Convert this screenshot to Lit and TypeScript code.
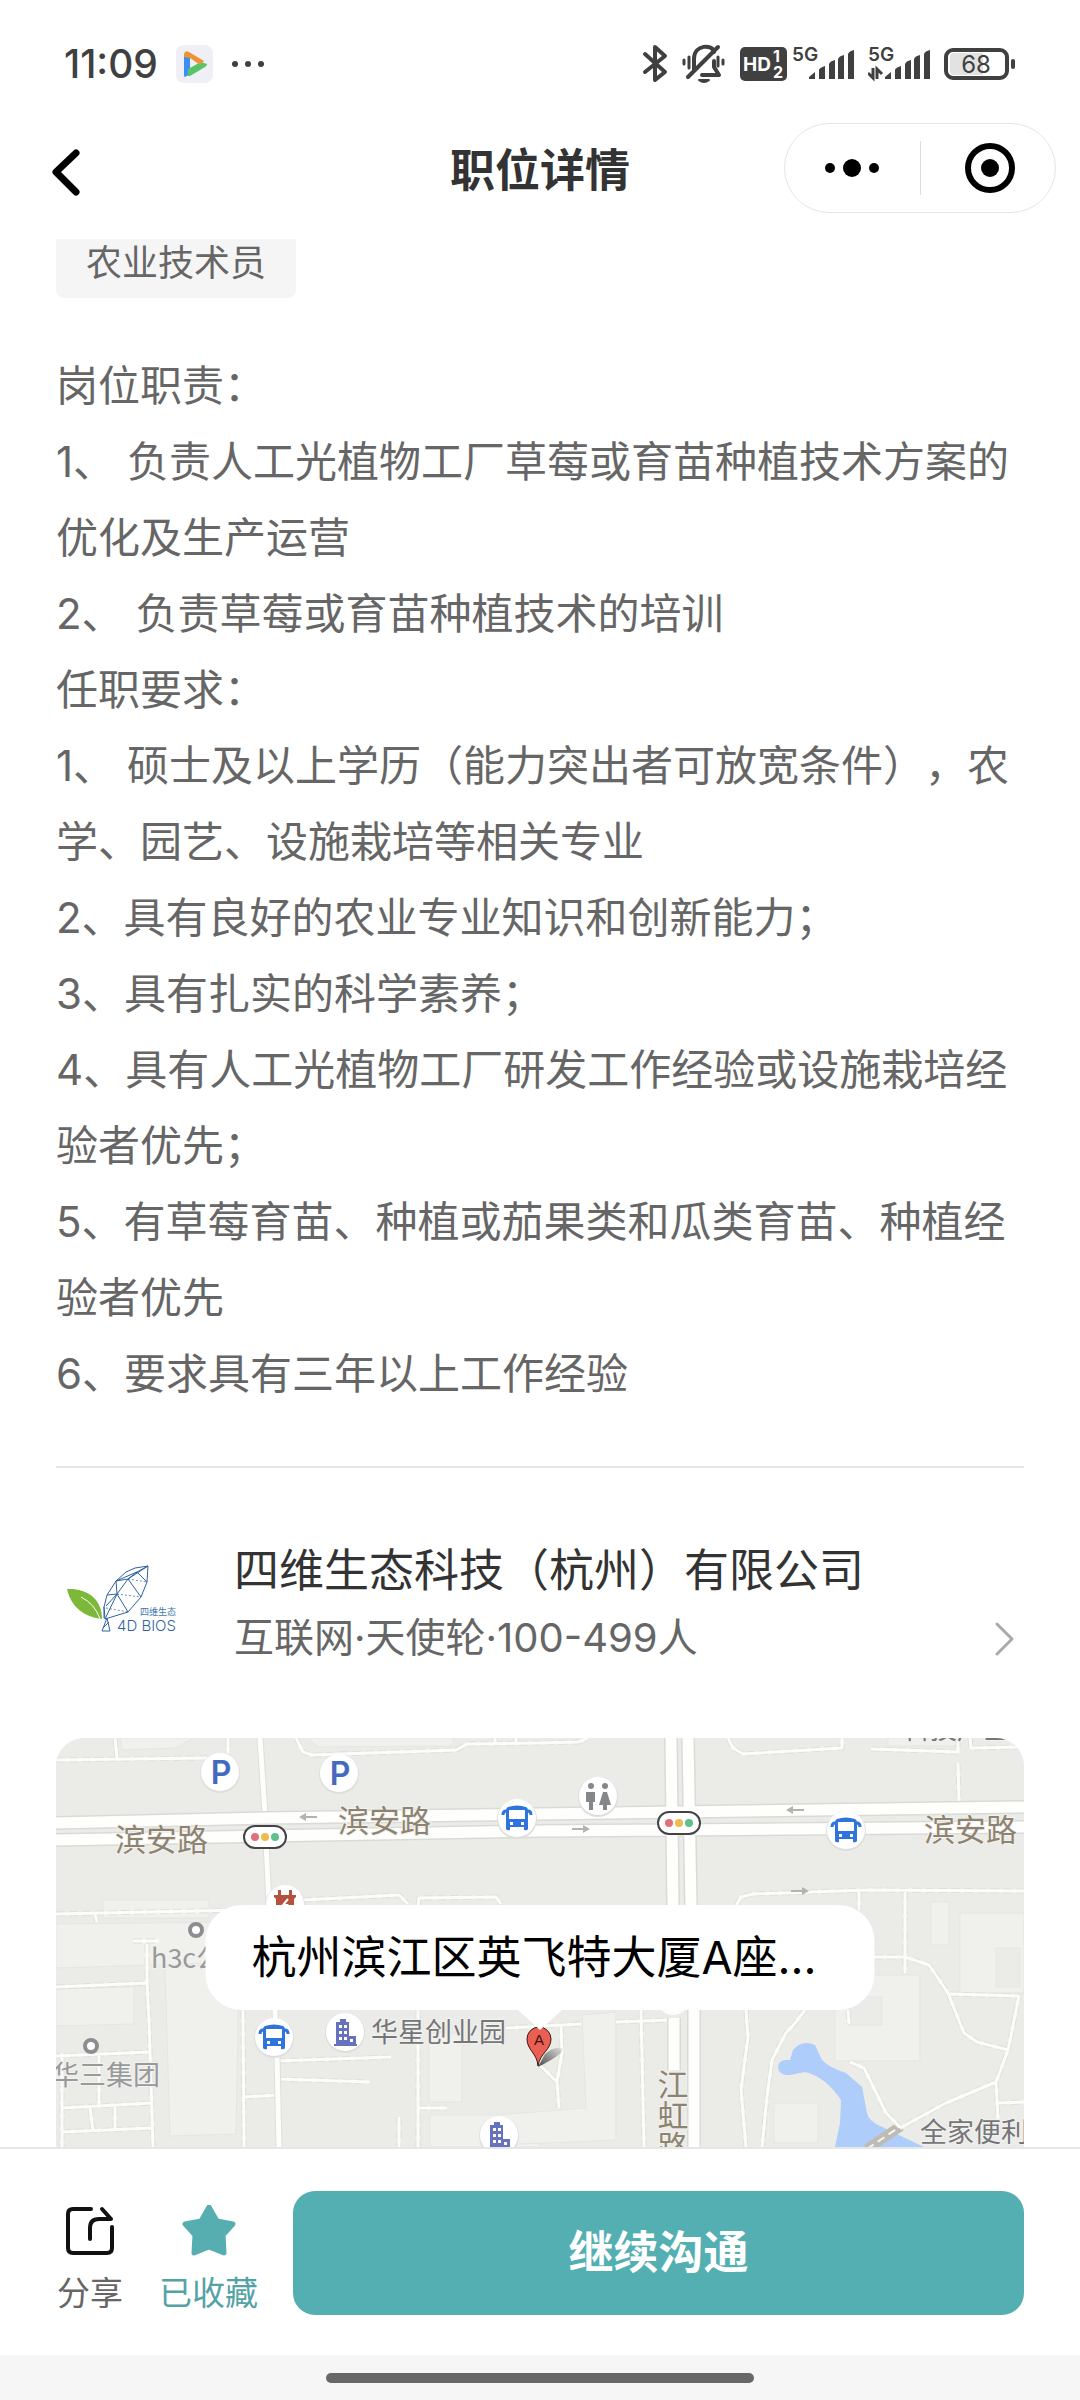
import { LitElement, html, css, svg } from "lit";
import { customElement, property } from "lit/decorators.js";

const TAG = "农业技术员";

const DESCRIPTION: string[] = [
  "岗位职责：",
  "1、 负责人工光植物工厂草莓或育苗种植技术方案的优化及生产运营",
  "2、 负责草莓或育苗种植技术的培训",
  "任职要求：",
  "1、 硕士及以上学历（能力突出者可放宽条件），农学、园艺、设施栽培等相关专业",
  "2、具有良好的农业专业知识和创新能力；",
  "3、具有扎实的科学素养；",
  "4、具有人工光植物工厂研发工作经验或设施栽培经验者优先；",
  "5、有草莓育苗、种植或茄果类和瓜类育苗、种植经验者优先",
  "6、要求具有三年以上工作经验",
];

@customElement("status-bar")
class StatusBar extends LitElement {
  static styles = css`
    :host {
      display: flex;
      align-items: center;
      justify-content: space-between;
      height: 118px;
      padding: 5px 64px 0 64px;
      color: #404040;
    }
    .group {
      display: flex;
      align-items: center;
      gap: 12px;
    }
    .left {
      gap: 18px;
    }
    .time {
      font: 500 39px/48px Inter, "Noto Sans CJK SC", sans-serif;
    }
    svg {
      display: block;
    }
    .net {
      font: 600 19px Inter, sans-serif;
    }
    .hd {
      font: 700 19px Inter, sans-serif;
    }
    .sim {
      font: 700 16px Inter, sans-serif;
    }
    .level {
      font: 400 24px Inter, sans-serif;
    }
  `;

  private bars(x: number) {
    return svg`
      <path fill="currentColor" d="M${x} 35 v-2 l6 -5 v7z"/>
      <path fill="currentColor" d="M${x + 10} 35 v-9 q0 -2 6 -4 v13z"/>
      <path fill="currentColor" d="M${x + 20} 35 v-15 q1 -3 6 -4 v19z"/>
      <path fill="currentColor" d="M${x + 29} 35 v-20 q1 -3 6 -4 v24z"/>
      <path fill="currentColor" d="M${x + 39} 35 v-25 q1 -3 6 -4 v29z"/>`;
  }

  render() {
    return html`
      <div class="group left">
        <span class="time">11:09</span>
        <svg width="37" height="38" viewBox="0 0 37 38" aria-hidden="true">
          <rect width="37" height="38" rx="8" fill="#eef0f5" />
          <path d="M8 9 L14 12 V29 L9 32 Q8 32 8 30z" fill="#3d8ef0" />
          <path d="M12 31 V24 L25 17 L31 19 Q31 21 29 22 L14 31z" fill="#56c467" />
          <path d="M8 9 Q9 5 13 7 L28 16 L24 20 L14 13 L8 12z" fill="#ee9338" />
        </svg>
        <svg width="34" height="10" viewBox="0 0 34 10" fill="currentColor" aria-hidden="true">
          <circle cx="4" cy="5" r="3" /><circle cx="17" cy="5" r="3" /><circle cx="30" cy="5" r="3" />
        </svg>
      </div>
      <div class="group">
        <svg width="26" height="40" viewBox="0 0 26 40" fill="none" stroke="currentColor" stroke-width="4" stroke-linecap="round" stroke-linejoin="round" aria-label="蓝牙">
          <path d="M3 10 L23 28 L13 36 V3 L23 12 L3 28" />
        </svg>
        <svg width="48" height="40" viewBox="0 0 48 40" fill="none" stroke="currentColor" stroke-width="4" stroke-linecap="round" stroke-linejoin="round" aria-label="静音">
          <path d="M14 26 V15 C14 0 33 0 34 8" />
          <path d="M34 17 V23 L39 31 H22" />
          <path d="M8 33 L38 3" />
          <path d="M19 36 Q24 40 29 36z" stroke-width="2" fill="currentColor" />
          <path d="M4 16 V20 M9 13 V24 M38 13 V22 M43 16 V20" stroke-width="3" />
        </svg>
        <svg width="116" height="40" viewBox="0 0 116 40" aria-hidden="true">
          <rect y="3" width="47" height="34" rx="5" fill="currentColor" />
          <text class="hd" x="3" y="27" fill="#fff">HD</text>
          <text class="sim" x="33" y="18" fill="#fff">1</text>
          <text class="sim" x="33" y="34" fill="#fff">2</text>
          <text class="net" x="52" y="17" fill="currentColor">5G</text>
          ${this.bars(69)}
        </svg>
        <svg width="64" height="40" viewBox="0 0 64 40" aria-hidden="true">
          <text class="net" x="0" y="17" fill="currentColor">5G</text>
          <path d="M5 24 V34 L0 29 M9 35 V25 L14 30" stroke="currentColor" stroke-width="3" fill="none" />
          ${this.bars(17)}
        </svg>
        <svg width="72" height="40" viewBox="0 0 72 40" aria-label="电量 68">
          <rect x="2" y="6" width="61" height="28" rx="7" fill="none" stroke="currentColor" stroke-width="4" />
          <path d="M10 9 H39 V31 H10 Q6 31 6 27 V13 Q6 9 10 9z" fill="#e2e2e2" />
          <rect x="67" y="15" width="4" height="10" rx="2" fill="currentColor" />
          <text class="level" x="32" y="29" text-anchor="middle" fill="currentColor">68</text>
        </svg>
      </div>
    `;
  }
}

@customElement("nav-bar")
class NavBar extends LitElement {
  @property() heading = "";

  static styles = css`
    :host {
      display: grid;
      grid-template-columns: 1fr auto 1fr;
      align-items: center;
      padding: 0 24px 26px 46px;
      background: #fff;
    }
    button {
      border: 0;
      padding: 0;
      background: none;
      color: #000;
      display: flex;
      align-items: center;
      justify-content: center;
    }
    .back {
      justify-self: start;
    }
    h1 {
      margin: 0 22px 0 0;
      font-size: 45px;
      line-height: 60px;
      font-weight: 700;
      color: #333;
    }
    .capsule {
      justify-self: end;
      display: grid;
      grid-template-columns: 1fr 1px 1fr;
      align-items: center;
      width: 272px;
      height: 90px;
      box-sizing: border-box;
      border: 1px solid #e6e6e6;
      border-radius: 45px;
    }
    .rule {
      height: 54px;
      background: #dcdcdc;
    }
    .capsule button {
      height: 88px;
    }
  `;

  render() {
    return html`
      <button class="back" aria-label="返回">
        <svg width="40" height="90" viewBox="0 0 40 90" fill="none" stroke="currentColor" stroke-width="7" stroke-linecap="round" stroke-linejoin="round">
          <path d="M30 30 L10 49 L30 69" />
        </svg>
      </button>
      <h1>${this.heading}</h1>
      <div class="capsule">
        <button aria-label="更多">
          <svg width="56" height="20" viewBox="0 0 56 20" fill="currentColor">
            <circle cx="6" cy="10" r="5" /><circle cx="28" cy="10" r="9" /><circle cx="50" cy="10" r="5" />
          </svg>
        </button>
        <span class="rule"></span>
        <button aria-label="关闭">
          <svg width="54" height="52" viewBox="0 0 54 52">
            <circle cx="29" cy="26" r="22" fill="none" stroke="currentColor" stroke-width="6" />
            <circle cx="29" cy="26" r="9" fill="currentColor" />
          </svg>
        </button>
      </div>
    `;
  }
}

@customElement("company-row")
class CompanyRow extends LitElement {
  static styles = css`
    a {
      display: flex;
      align-items: center;
      gap: 58px;
      padding: 70px 0;
      color: inherit;
      text-decoration: none;
    }
    .logo {
      flex: none;
      overflow: visible;
    }
    .cn {
      font: 9px "Noto Sans CJK SC", sans-serif;
    }
    .en {
      font: 300 15px Inter, sans-serif;
    }
    .info {
      flex: 1;
      display: grid;
      gap: 10px;
      text-spacing-trim: space-all;
    }
    .name {
      font-size: 45px;
      line-height: 60px;
      color: #333;
      white-space: nowrap;
    }
    .meta {
      display: flex;
      align-items: center;
      justify-content: space-between;
      padding-right: 8px;
      font-family: Inter, "Noto Sans CJK SC", sans-serif;
      font-size: 40px;
      line-height: 60px;
      color: #666;
    }
  `;

  render() {
    return html`
      <a href="#company">
        <svg class="logo" width="120" height="120" viewBox="0 0 120 120" aria-label="4D BIOS">
          <path d="M11 46 C30 45 46 55 46 76 C28 74 15 64 11 46z" fill="#7cb83a" />
          <path d="M25 54 Q39 61 44 76" stroke="#fff" stroke-width="1" fill="none" />
          <g fill="none" stroke="#2f639f" stroke-width="1" stroke-linejoin="round">
            <path d="M92 23 L79 25 L70 29 L60 38 L51 52 L48 64 L49 76 L72 69 L85 54 L91 39z" />
            <path d="M60 38 L72 36 L92 23 M60 38 L81 29 L92 23 M81 29 L91 39 M81 29 L72 36 L85 54 M72 36 L61 51 L72 69 M61 51 L51 52 M61 51 L60 38 M61 51 L49 76 M61 51 L50 63" />
            <path d="M72 36 L91 39 M61 51 L85 54 M50 65 L72 69" stroke-width="1" stroke-dasharray="2 2" opacity="0.7" />
            <path d="M51 75 L46 88 H54z M47 85 L53 79" />
            <path d="M48 64 V75" />
          </g>
          <text class="cn" x="84" y="72" fill="#3f76ab">四维生态</text>
          <text class="en" x="61" y="88" fill="#2f639f">4D BIOS</text>
        </svg>
        <div class="info">
          <span class="name">四维生态科技（杭州）有限公司</span>
          <span class="meta">
            <span>互联网·天使轮·100-499人</span>
            <svg width="24" height="40" viewBox="0 0 24 40" fill="none" stroke="#aaa" stroke-width="3" stroke-linecap="round" stroke-linejoin="round" aria-hidden="true">
              <path d="M5 6 L20 21 L5 36" />
            </svg>
          </span>
        </div>
      </a>
    `;
  }
}

@customElement("location-map")
class LocationMap extends LitElement {
  @property() address = "";

  static styles = css`
    :host {
      display: block;
      position: relative;
      overflow: hidden;
      border-radius: 28px 28px 0 0;
      background: #ebebe8;
    }
    svg {
      display: block;
      width: 100%;
      height: 100%;
    }
    .road-name {
      font: 31px "Noto Sans CJK SC", sans-serif;
      fill: #8d8371;
      stroke: #f3f2ef;
      stroke-width: 2px;
      paint-order: stroke;
    }
    .upright {
      writing-mode: vertical-rl;
    }
    .poi-name {
      font: 27px "Noto Sans CJK SC", sans-serif;
      stroke: #f3f2ef;
      stroke-width: 2px;
      paint-order: stroke;
    }
    .parking {
      font: 600 32px Inter, sans-serif;
      fill: #4469c0;
    }
    .letter {
      font: 15px "Liberation Sans", sans-serif;
    }
    .bubble {
      position: absolute;
      left: 50%;
      top: 167px;
      transform: translateX(-50%);
      padding: 0 58px 0 46px;
      border-radius: 36px;
      background: #fff;
      color: #000;
      font-family: Inter, "Noto Sans CJK SC", sans-serif;
      font-size: 45px;
      line-height: 105px;
      white-space: nowrap;
    }
    .bubble::after {
      content: "";
      position: absolute;
      left: 50%;
      top: 100%;
      width: 44px;
      height: 20px;
      transform: translateX(-50%);
      background: #fff;
      clip-path: polygon(0 0, 100% 0, 50% 100%);
    }
  `;

  private disc(x: number, y: number, content: unknown) {
    return svg`<g transform="translate(${x} ${y})">
      <circle r="20" cy="1" fill="#dededb"/><circle r="19" fill="#fff"/>${content}</g>`;
  }

  private bus(x: number, y: number) {
    return this.disc(x, y, svg`
      <path fill="#2f74dc" d="M-9 -11 Q0 -14 9 -11 Q11 -10 11 -8 V11 Q10 13 7 12 V9 H-7 V12 Q-10 13 -11 11 V-8 Q-11 -10 -9 -11z"/>
      <path d="M-11 -7 Q-14 -7 -14 -3 M11 -7 Q14 -7 14 -3" stroke="#2f74dc" stroke-width="3" fill="none"/>
      <path fill="#fff" d="M-8 -8 H8 V1 H-8z M-7 4 h3 v3 h-3z M4 4 h3 v3 h-3z"/>`);
  }

  private tower(x: number, y: number) {
    return this.disc(x, y, svg`
      <path fill="#6672bd" d="M-7 -10 h2 v-3 h6 v3 h3 V4 h7 v8 h1 v2 H-11 v-2 h2 V-10z"/>
      <path fill="#fff" d="M-6 -7 h3 v3 h-3z M-1 -7 h3 v3 h-3z M-6 -1 h3 v3 h-3z M-1 -1 h3 v3 h-3z M-6 5 h3 v3 h-3z M-1 5 h3 v3 h-3z M5 7 h3 v3 h-3z"/>`);
  }

  private lights(x: number, y: number) {
    return svg`<g transform="translate(${x} ${y})">
      <rect x="-21" y="-11" width="42" height="22" rx="11" fill="#fff" stroke="#444" stroke-width="2"/>
      <circle cx="-10" r="4" fill="#e0707c"/><circle r="4" fill="#eebc4c"/><circle cx="10" r="4" fill="#5fc08c"/></g>`;
  }

  private arrow(x: number, y: number, direction: number) {
    return svg`<path transform="translate(${x} ${y}) scale(${direction} 1)" d="M-9 -1 H2 V-4 L9 0 L2 4 V1 H-9z" fill="#b3b3b0"/>`;
  }

  private spot(x: number, y: number) {
    return svg`<circle cx="${x}" cy="${y}" r="6" fill="#fff" stroke="#8b8d91" stroke-width="4"/>`;
  }

  render() {
    const lanes =
      "M0 22 L151 20 M59 0 L61 20 M172 0 V15 M240 0 L247 14 L256 17 L400 12 L411 6 L484 5 L522 4 L532 0 M439 0 V5 M460 0 V5 " +
      "M0 176 L185 172 M39 176 L41 184 M77 203 H103 M91 206 V245 L93 282 L97 409 M0 249 L90 245 M0 318 L94 314 " +
      "M6 370 L96 365 M6 394 L96 390 M6 315 V409 M43 315 V367 M34 370 L37 392 M59 369 V392 M187 272 L188 409 M188 359 L221 357 " +
      "M221 323 L335 319 M221 341 L314 344 M362 272 V409 M362 370 H391 M343 379 V409 M450 290 L525 286 " +
      "M247 162 L343 157 L352 166 M362 168 L363 160 L440 159 L445 166 " +
      "M672 0 L677 10 L687 16 L786 10 V0 M815 11 L902 14 V0 M914 0 L915 10 L968 9 M902 25 L903 64 " +
      "M680 168 L685 159 L697 156 L811 152 L968 153 M803 154 V172 M849 154 V235 " +
      "M818 219 H849 L873 227 L892 255 L908 295 L921 304 L952 312 M894 256 L963 258 L952 312 L940 344 L942 382 " +
      "M940 344 L890 365 L844 390 M942 365 L968 364 M794 324 L808 330 L830 375 L844 389 M792 272 L793 286 " +
      "M749 272 L739 285 L730 295 L716 322 L711 359 L706 409 M690 272 L692 299 L685 352 L690 409 " +
      "M585 272 L588 409 M560 284 L613 282 M505 287 L506 315 L501 344 L503 370 M484 327 L501 344";
    const roads =
      "M0 85 L209 80 L484 76 L968 69 M0 102 L209 98 L484 93 L968 89 M615 0 L617 168 M632 0 L635 168 M618 280 V332 M638 270 V409";
    const streets = "M204 0 L209 76 M210 104 L213 166 M219 272 L221 319 L223 409";
    return html`
      <svg viewBox="0 0 968 409" preserveAspectRatio="xMidYMin slice" role="img" aria-label="地图">
        <defs>
          <linearGradient id="pin-shade" x1="0" y1="1" x2="1" y2="0">
            <stop offset="0" stop-color="#000" stop-opacity="0.7" />
            <stop offset="1" stop-color="#000" stop-opacity="0.05" />
          </linearGradient>
        </defs>
        <g fill="#f0f0ed" stroke="#e5e5e1" stroke-width="1">
          <path d="M64 0 H137 L120 10 L66 12z M252 0 H398 L396 8 L262 9z" />
          <rect x="47" y="162" width="106" height="18" />
          <path d="M0 186 L187 184 L186 224 L0 230z" />
          <path d="M109 229 L183 226 L180 396 L114 398z" />
          <path d="M0 251 L78 249 V286 L0 288z" />
          <rect x="373" y="295" width="33" height="69" />
          <rect x="374" y="377" width="110" height="32" />
          <path d="M526 277 L560 274 V402 L440 407 V377 L530 370z" />
          <rect x="718" y="365" width="44" height="40" />
          <rect x="779" y="237" width="85" height="86" />
          <rect x="792" y="259" width="34" height="28" fill="#ebebe8" />
          <rect x="904" y="175" width="64" height="80" />
          <rect x="875" y="164" width="18" height="43" />
          <rect x="940" y="210" width="24" height="39" fill="#ebebe8" />
          <rect x="832" y="0" width="68" height="8" />
        </g>
        <path fill="#aecdfb" d="M722 329 Q723 322 730 322 H734 L737 312 Q746 301 759 307 L766 322 Q772 329 790 335 L806 349 L811 375 Q812 381 820 386 L868 409 H779 L784 385 L785 362 Q770 339 749 334 L734 337 Q723 338 722 329z" />
        <path d="M811 411 L845 388" stroke="#bdbcb4" stroke-width="10" />
        <path d="M811 411 L845 388" stroke="#f6f6f2" stroke-width="2" stroke-dasharray="8 5" />
        <g fill="none" stroke-linejoin="round">
          <path d="${lanes}" stroke="#dfdfdb" stroke-width="5" stroke-dasharray="9 4" />
          <path d="${lanes}" stroke="#fcfcf9" stroke-width="3" />
          <path d="${streets}" stroke="#dededa" stroke-width="7" />
          <path d="${streets}" stroke="#fdfdfb" stroke-width="5" />
          <path d="${roads}" stroke="#dadad6" stroke-width="14" />
          <path d="${roads}" stroke="#fefefd" stroke-width="11" />
        </g>
        <circle cx="617" cy="260" r="17" fill="#fdfdfb" />
        ${this.arrow(252, 79, -1)} ${this.arrow(525, 91, 1)} ${this.arrow(739, 72, -1)} ${this.arrow(744, 153, 1)}
        ${this.disc(164, 34, svg`<text class="parking" x="1" y="12" text-anchor="middle">P</text>`)}
        ${this.disc(283, 35, svg`<text class="parking" x="1" y="12" text-anchor="middle">P</text>`)}
        ${this.bus(461, 80)} ${this.bus(790, 92)} ${this.bus(218, 299)}
        ${this.tower(289, 294)} ${this.tower(443, 397)}
        ${this.disc(542, 58, svg`
          <g fill="#85888a">
            <circle cx="-7" cy="-10" r="3"/><circle cx="7" cy="-10" r="3"/>
            <path d="M-12 -4 H-3 V6 H-5 V14 H-9 V6 H-12z M5 -4 H9 L13 9 H9 V14 H5 V9 H1z"/>
          </g>`)}
        ${this.disc(229, 166, svg`
          <path fill="#b4523f" d="M-7 -14 h3 v5 h8 v-5 h3 v5 h4 v2 l-2 2 v8 h-18 v-8 l-2 -2 v-2 h4z"/>
          <path d="M3 -5 L-2 1 H2 L-1 6" stroke="#fff" stroke-width="2" fill="none"/>`)}
        ${this.lights(209, 99)} ${this.lights(623, 85)}
        ${this.spot(140, 192)} ${this.spot(35, 308)}
        <text class="road-name" x="59" y="113">滨安路</text>
        <text class="road-name" x="282" y="94">滨安路</text>
        <text class="road-name" x="868" y="103">滨安路</text>
        <text class="road-name upright" x="617" y="331">江虹路</text>
        <text class="poi-name" x="95" y="230" fill="#98999b">h3c公</text>
        <text class="poi-name" x="-4" y="347" fill="#98999b">华三集团</text>
        <text class="poi-name" x="315" y="304" fill="#75767a">华星创业园</text>
        <text class="poi-name" x="864" y="404" fill="#75767a">全家便利店</text>
        <text class="poi-name" x="847" y="1" fill="#75767a">科技产业</text>
        <path d="M482 329 L489 316 Q500 307 507 311 Q506 317 482 329z" fill="url(#pin-shade)" />
        <path d="M482 328 C481 315 471 312 471 301 A12 12 0 0 1 495 301 C495 312 484 315 482 328z" fill="#ea5f54" stroke="#3c1512" stroke-width="1" />
        <text class="letter" x="483" y="307" text-anchor="middle" fill="#3c1512">A</text>
      </svg>
      <div class="bubble">${this.address}</div>
    `;
  }
}

@customElement("action-bar")
class ActionBar extends LitElement {
  static styles = css`
    :host {
      display: flex;
      align-items: flex-end;
      gap: 35px;
      padding: 42px 56px 40px 57px;
      border-top: 2px solid #e6e6e6;
      background: #fff;
    }
    button {
      border: 0;
      padding: 0;
      background: none;
      font: inherit;
    }
    .icons {
      display: flex;
      gap: 36px;
    }
    .icons button {
      display: grid;
      justify-items: center;
      gap: 8px;
      font-size: 33px;
      line-height: 48px;
      color: #666;
    }
    .icons .saved {
      color: #53a3a6;
    }
    .primary {
      flex: 1;
      border-radius: 22px;
      background: #53afb2;
      color: #fff;
      font-family: Inter, "Noto Sans CJK SC", sans-serif;
      font-size: 45px;
      font-weight: 700;
      line-height: 124px;
    }
  `;

  render() {
    return html`
      <div class="icons">
        <button>
          <svg width="54" height="54" viewBox="0 0 54 54" fill="none" stroke="#111" stroke-width="4" stroke-linecap="round" stroke-linejoin="round" aria-hidden="true">
            <path d="M28 4 H10 Q5 4 5 9 V43 Q5 48 10 48 H44 Q49 48 49 43 V22" />
            <path d="M27 34 V23 Q27 14 36 14 H48 L39 4" />
          </svg>
          分享
        </button>
        <button class="saved">
          <svg width="54" height="54" viewBox="0 0 54 54" fill="#56aeb1" stroke="#56aeb1" stroke-width="5" stroke-linejoin="round" aria-hidden="true">
            <path d="M27 2 L35 16 L51 19 L41 30 L42 48 L27 42 L12 48 L13 30 L3 19 L19 16z" />
          </svg>
          已收藏
        </button>
      </div>
      <button class="primary">继续沟通</button>
    `;
  }
}

@customElement("app-root")
class AppRoot extends LitElement {
  static styles = css`
    :host {
      display: flex;
      flex-direction: column;
      height: 100vh;
      overflow: hidden;
      background: #fff;
      font-family: "Noto Sans CJK SC", "Noto Sans", sans-serif;
    }
    main {
      flex: 1;
      min-height: 0;
      overflow: hidden;
      display: flex;
      flex-direction: column;
      padding: 0 56px;
    }
    .tag {
      align-self: flex-start;
      padding: 0 30px 16px;
      border-radius: 0 0 8px 8px;
      background: #f5f5f5;
      color: #666;
      font-size: 36px;
      line-height: 43px;
    }
    .description {
      margin-top: 50px;
      padding-bottom: 54px;
      border-bottom: 2px solid #e6e6e6;
      font-family: Inter, "Noto Sans CJK SC", sans-serif;
      font-size: 42px;
      line-height: 76px;
      color: #666;
      text-spacing-trim: space-all;
    }
    .description p {
      margin: 0;
    }
    .map {
      flex: 1;
      min-height: 0;
    }
    .home {
      display: flex;
      align-items: center;
      justify-content: center;
      height: 45px;
      background: #f6f6f6;
    }
    .indicator {
      width: 428px;
      height: 10px;
      border-radius: 5px;
      background: #686868;
    }
  `;

  render() {
    return html`
      <status-bar></status-bar>
      <nav-bar heading="职位详情"></nav-bar>
      <main>
        <span class="tag">${TAG}</span>
        <section class="description">${DESCRIPTION.map((line) => html`<p>${line}</p>`)}</section>
        <company-row></company-row>
        <location-map class="map" address="杭州滨江区英飞特大厦A座..."></location-map>
      </main>
      <action-bar></action-bar>
      <div class="home"><span class="indicator"></span></div>
    `;
  }
}
